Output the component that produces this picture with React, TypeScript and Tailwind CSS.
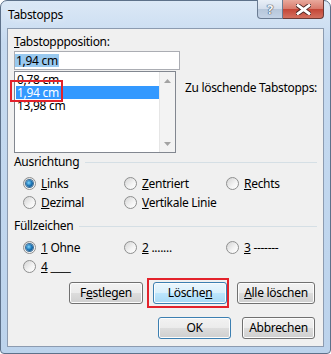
import React from "react";

function Radio({ checked, children }: { checked?: boolean; children: React.ReactNode }) {
  return (
    <div className="flex h-[19px] items-center">
      <span className="flex h-[13px] w-[13px] items-center justify-center rounded-full border border-[#8e8f8f] bg-[linear-gradient(135deg,#d4d4d4,#f4f4f4_60%,#ffffff)]">
        {checked && (
          <span className="h-[7px] w-[7px] rounded-full bg-[radial-gradient(circle_at_40%_40%,#7fd6ff,#1a73b5_50%,#0a3f70)] shadow-[0_0_0_1px_#3f6f96]" />
        )}
      </span>
      <span className="ml-[5px] whitespace-nowrap">{children}</span>
    </div>
  );
}

const btnBase =
  "flex h-[22px] items-center justify-center rounded-[3px] border text-black shadow-[inset_0_0_0_1px_#fcfcfc]";
const btnNormal =
  "border-[#707070] bg-[linear-gradient(#f2f2f2_0%,#ebebeb_50%,#dddddd_50%,#cfcfcf_100%)]";
const btnHover =
  "border-[#3c7fb1] bg-[linear-gradient(#eaf6fd_0%,#d9f0fc_50%,#bee6fd_50%,#a7d9f5_100%)]";
const btnDefault =
  "border-[#3c7fb1] bg-[linear-gradient(#f2f2f2_0%,#ebebeb_50%,#dddddd_50%,#cfcfcf_100%)] shadow-[inset_0_0_0_1px_#48d8fb]";

function GroupLabel({ children }: { children: React.ReactNode }) {
  return (
    <div className="flex h-[14px] items-center">
      <span>{children}</span>
      <span className="ml-[6px] h-px flex-1 bg-[#d5dfe5]" />
    </div>
  );
}

export default function App() {
  return (
    <div className="h-[354px] w-[331px] bg-white font-['Noto_Sans',sans-serif] text-[12px] leading-[14px] tracking-[-0.3px] text-black">
      {/* window frame */}
      <div className="flex h-full flex-col rounded-t-[7px] rounded-b-[4px] border border-[#5d718a] bg-[linear-gradient(#dbe8f6_0%,#c6daf0_12%,#bcd3ec_100%)] px-[6px] pb-[6px]">
        {/* title bar */}
        <div className="flex h-[27px] items-start">
          <span className="mt-[7px] ml-[1px] text-[12px] [text-shadow:0_0_6px_#ffffff]">Tabstopps</span>
          <div className="-mt-px ml-auto flex">
            <div className="flex h-[19px] w-[26px] items-center justify-center rounded-bl-[4px] border border-t-0 border-[#6b7c93] bg-[linear-gradient(#e9eff7_0%,#d3deec_50%,#b6c6da_50%,#c4d3e6_100%)] text-[13px] font-bold text-[#f4f6f9] [text-shadow:0_0_1px_#3b4a5e,0_0_1px_#3b4a5e,0_0_1px_#3b4a5e]">
              ?
            </div>
            <div className="flex h-[19px] w-[41px] items-center justify-center rounded-br-[4px] border border-l-0 border-t-0 border-[#6b3a36] bg-[linear-gradient(#e9a99c_0%,#d8796b_50%,#c44536_50%,#d3705f_100%)]">
              <svg width="15" height="11" viewBox="0 0 15 11">
                <path d="M2 1.5 L13 9.5 M13 1.5 L2 9.5" stroke="#4a2320" strokeWidth="4.6" strokeLinecap="square" />
                <path d="M2 1.5 L13 9.5 M13 1.5 L2 9.5" stroke="#ffffff" strokeWidth="2.8" strokeLinecap="square" />
              </svg>
            </div>
          </div>
        </div>

        {/* client area */}
        <div className="relative flex-1 border border-[#8c9bb0] bg-[#f0f0f0] px-[6px]">
          <div className="mt-[6px]">
            <u>T</u>abstoppposition:
          </div>
          <div className="mt-[2px] flex h-[19px] w-[166px] items-center border border-[#abadb3] bg-white">
            <span className="inline-block bg-[#99c9ef] px-[1px] leading-[13px]">1,94 cm</span>
          </div>
          <div className="mt-[1px] flex">
            <div className="flex h-[82px] w-[166px] border border-[#828790] bg-white">
              <div className="flex-1 pt-[1px] pl-[1px]">
                <div className="h-[13px] pl-[1px] leading-[13px]">0,78 cm</div>
                <div className="h-[13px] bg-[#3399ff] pl-[1px] leading-[13px] text-white">1,94 cm</div>
                <div className="h-[13px] pl-[1px] leading-[13px]">13,98 cm</div>
              </div>
              <div className="flex w-[16px] flex-col justify-between border-l border-[#e6e6e6] bg-[#f3f3f3]">
                <div className="flex h-[17px] items-center justify-center">
                  <svg width="7" height="4" viewBox="0 0 7 4">
                    <path d="M3.5 0 L7 4 L0 4 Z" fill="#a3a3a3" />
                  </svg>
                </div>
                <div className="flex h-[17px] items-center justify-center">
                  <svg width="7" height="4" viewBox="0 0 7 4">
                    <path d="M0 0 L7 0 L3.5 4 Z" fill="#a3a3a3" />
                  </svg>
                </div>
              </div>
            </div>
            <div className="mt-[10px] ml-[9px] whitespace-nowrap">Zu löschende Tabstopps:</div>
          </div>

          <div className="mt-[2px]">
            <GroupLabel>Ausrichtung</GroupLabel>
          </div>
          <div className="mt-[5px] grid grid-cols-[101px_102px_1fr] pl-[9px]">
            <Radio checked>
              <u>L</u>inks
            </Radio>
            <Radio>
              <u>Z</u>entriert
            </Radio>
            <Radio>
              <u>R</u>echts
            </Radio>
            <Radio>
              <u>D</u>ezimal
            </Radio>
            <Radio>
              <u>V</u>ertikale Linie
            </Radio>
          </div>

          <div className="mt-[7px]">
            <GroupLabel>Füllzeichen</GroupLabel>
          </div>
          <div className="mt-[5px] grid grid-cols-[101px_102px_1fr] pl-[9px]">
            <Radio checked>
              <u>1</u> Ohne
            </Radio>
            <Radio>
              <u>2</u> .......
            </Radio>
            <Radio>
              <u>3</u> -------
            </Radio>
            <Radio>
              <u>4</u> ____
            </Radio>
          </div>

          <div className="mt-[6px] mr-[2px] flex justify-end gap-[10px]">
            <button className={`${btnBase} ${btnNormal} w-[74px]`}>
              F<u>e</u>stlegen
            </button>
            <button className={`${btnBase} ${btnHover} w-[74px]`}>
              Lösche<u>n</u>
            </button>
            <button className={`${btnBase} ${btnNormal} w-[78px]`}>
              <u>A</u>lle löschen
            </button>
          </div>
          <div className="mt-[13px] mr-[2px] flex justify-end gap-[11px]">
            <button className={`${btnBase} ${btnDefault} w-[73px]`}>OK</button>
            <button className={`${btnBase} ${btnNormal} w-[73px]`}>Abbrechen</button>
          </div>

          {/* red highlight boxes */}
          <div className="absolute top-[51px] left-[2px] h-[22px] w-[53px] border-2 border-[#e3222b]" />
          <div className="absolute top-[249px] left-[139px] h-[30px] w-[82px] border-2 border-[#e3222b]" />
        </div>
      </div>
    </div>
  );
}
